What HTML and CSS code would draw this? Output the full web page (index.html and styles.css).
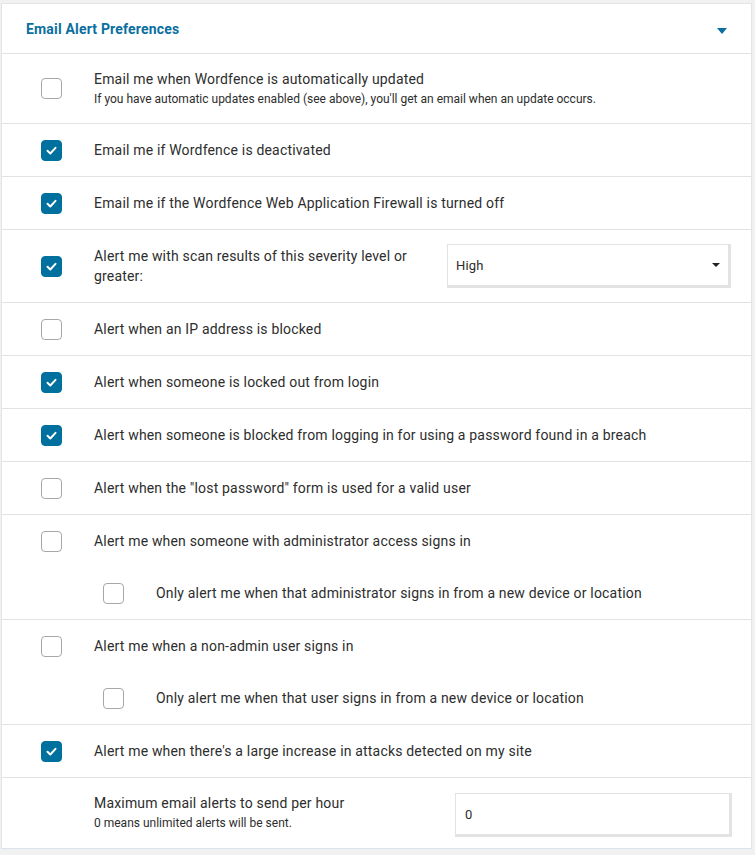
FILE: index.html
```html
<!DOCTYPE html>
<html lang="en">
<head>
<meta charset="utf-8">
<title>Email Alert Preferences</title>
<link rel="stylesheet" href="styles.css">
</head>
<body>
<div class="panel">
  <div class="panel-header">
    <span class="panel-title">Email Alert Preferences</span>
    <span class="caret"></span>
  </div>

  <div class="row row-tall">
    <span class="cb"></span>
    <div class="label">
      <div class="title">Email me when Wordfence is automatically updated</div>
      <div class="desc">If you have automatic updates enabled (see above), you'll get an email when an update occurs.</div>
    </div>
  </div>

  <div class="row">
    <span class="cb checked"><svg viewBox="0 0 21 21"><polyline points="6.5,10.8 9.3,13.5 14.5,7.8"/></svg></span>
    <div class="label">Email me if Wordfence is deactivated</div>
  </div>

  <div class="row">
    <span class="cb checked"><svg viewBox="0 0 21 21"><polyline points="6.5,10.8 9.3,13.5 14.5,7.8"/></svg></span>
    <div class="label">Email me if the Wordfence Web Application Firewall is turned off</div>
  </div>

  <div class="row row-select">
    <span class="cb checked"><svg viewBox="0 0 21 21"><polyline points="6.5,10.8 9.3,13.5 14.5,7.8"/></svg></span>
    <div class="label grow">Alert me with scan results of this severity level or greater:</div>
    <div class="select">
      <span>High</span>
      <span class="select-caret"></span>
    </div>
  </div>

  <div class="row">
    <span class="cb"></span>
    <div class="label">Alert when an IP address is blocked</div>
  </div>

  <div class="row">
    <span class="cb checked"><svg viewBox="0 0 21 21"><polyline points="6.5,10.8 9.3,13.5 14.5,7.8"/></svg></span>
    <div class="label">Alert when someone is locked out from login</div>
  </div>

  <div class="row">
    <span class="cb checked"><svg viewBox="0 0 21 21"><polyline points="6.5,10.8 9.3,13.5 14.5,7.8"/></svg></span>
    <div class="label">Alert when someone is blocked from logging in for using a password found in a breach</div>
  </div>

  <div class="row">
    <span class="cb"></span>
    <div class="label">Alert when the "lost password" form is used for a valid user</div>
  </div>

  <div class="group">
    <div class="row row-plain">
      <span class="cb"></span>
      <div class="label">Alert me when someone with administrator access signs in</div>
    </div>
    <div class="row row-plain row-sub">
      <span class="cb"></span>
      <div class="label">Only alert me when that administrator signs in from a new device or location</div>
    </div>
  </div>

  <div class="group">
    <div class="row row-plain">
      <span class="cb"></span>
      <div class="label">Alert me when a non-admin user signs in</div>
    </div>
    <div class="row row-plain row-sub">
      <span class="cb"></span>
      <div class="label">Only alert me when that user signs in from a new device or location</div>
    </div>
  </div>

  <div class="row">
    <span class="cb checked"><svg viewBox="0 0 21 21"><polyline points="6.5,10.8 9.3,13.5 14.5,7.8"/></svg></span>
    <div class="label">Alert me when there's a large increase in attacks detected on my site</div>
  </div>

  <div class="row row-last">
    <div class="label grow">
      <div class="title">Maximum email alerts to send per hour</div>
      <div class="desc">0 means unlimited alerts will be sent.</div>
    </div>
    <div class="input">0</div>
  </div>
</div>
</body>
</html>
```

FILE: styles.css
```css
* { box-sizing: border-box; }

html, body {
  margin: 0;
  padding: 0;
  background: #f1f1f1;
}

body {
  font-family: Roboto, "Noto Sans", "Liberation Sans", sans-serif;
  font-size: 14px;
  letter-spacing: 0.18px;
  color: #2d2d2d;
  padding: 3px 3px 6px 1px;
}

.panel {
  background: #fff;
  border: 1px solid #e4e4e4;
  border-bottom-color: #dde3ea;
}

.panel-header {
  display: flex;
  align-items: center;
  justify-content: space-between;
  padding: 0 24px 0 24px;
  border-bottom: 1px solid #e2e2e2;
  height: 50px;
}

.panel-title {
  font-weight: 700;
  font-size: 14px;
  color: #0a6f9f;
}

.caret {
  width: 0;
  height: 0;
  border-left: 5.5px solid transparent;
  border-right: 5.5px solid transparent;
  border-top: 6px solid #0a6f9f;
  margin-top: 4px;
}

.row {
  display: flex;
  align-items: center;
  min-height: 53px;
  padding: 0 20px 0 39px;
  border-bottom: 1px solid #e2e2e2;
}

.row-tall {
  padding-top: 15px;
  padding-bottom: 16px;
}

.row-select {
  padding-top: 14px;
  padding-bottom: 14px;
}

.group {
  border-bottom: 1px solid #e2e2e2;
}

.row-plain {
  border-bottom: none;
  min-height: 52px;
}

.row-sub {
  padding-left: 101px;
}

.row-last {
  align-items: flex-start;
  padding: 15px 19px 11px 92px;
  min-height: 0;
  border-bottom: none;
}

.cb {
  flex: 0 0 21px;
  width: 21px;
  height: 21px;
  border: 1px solid #a7a7a7;
  border-radius: 4px;
  margin-right: 32px;
  display: flex;
  align-items: center;
  justify-content: center;
  background: #fff;
}

.cb.checked {
  background: #00709e;
  border-color: #00709e;
}

.cb svg {
  width: 21px;
  height: 21px;
  flex: none;
}

.cb svg polyline {
  fill: none;
  stroke: #fff;
  stroke-width: 2;
  stroke-linecap: round;
  stroke-linejoin: round;
}

.label {
  line-height: 20px;
}

.grow {
  flex: 1 1 auto;
  min-width: 0;
  padding-right: 20px;
}

.title {
  line-height: 20px;
}

.desc {
  font-size: 12px;
  letter-spacing: 0;
  line-height: 15px;
  margin-top: 3px;
}

.select {
  flex: 0 0 284px;
  height: 44px;
  border-style: solid;
  border-color: #e3e3e3;
  border-width: 1px 3px 3px 1px;
  display: flex;
  align-items: center;
  justify-content: space-between;
  padding: 0 8px 0 8px;
  font-size: 13px;
  color: #2d2d2d;
}

.select-caret {
  width: 0;
  height: 0;
  border-left: 4px solid transparent;
  border-right: 4px solid transparent;
  border-top: 4.5px solid #222;
}

.input {
  flex: 0 0 277px;
  height: 44px;
  border-style: solid;
  border-color: #e3e3e3;
  border-width: 1px 3px 3px 1px;
  display: flex;
  align-items: center;
  padding: 0 9px;
  font-size: 13px;
  color: #2d2d2d;
}
```
